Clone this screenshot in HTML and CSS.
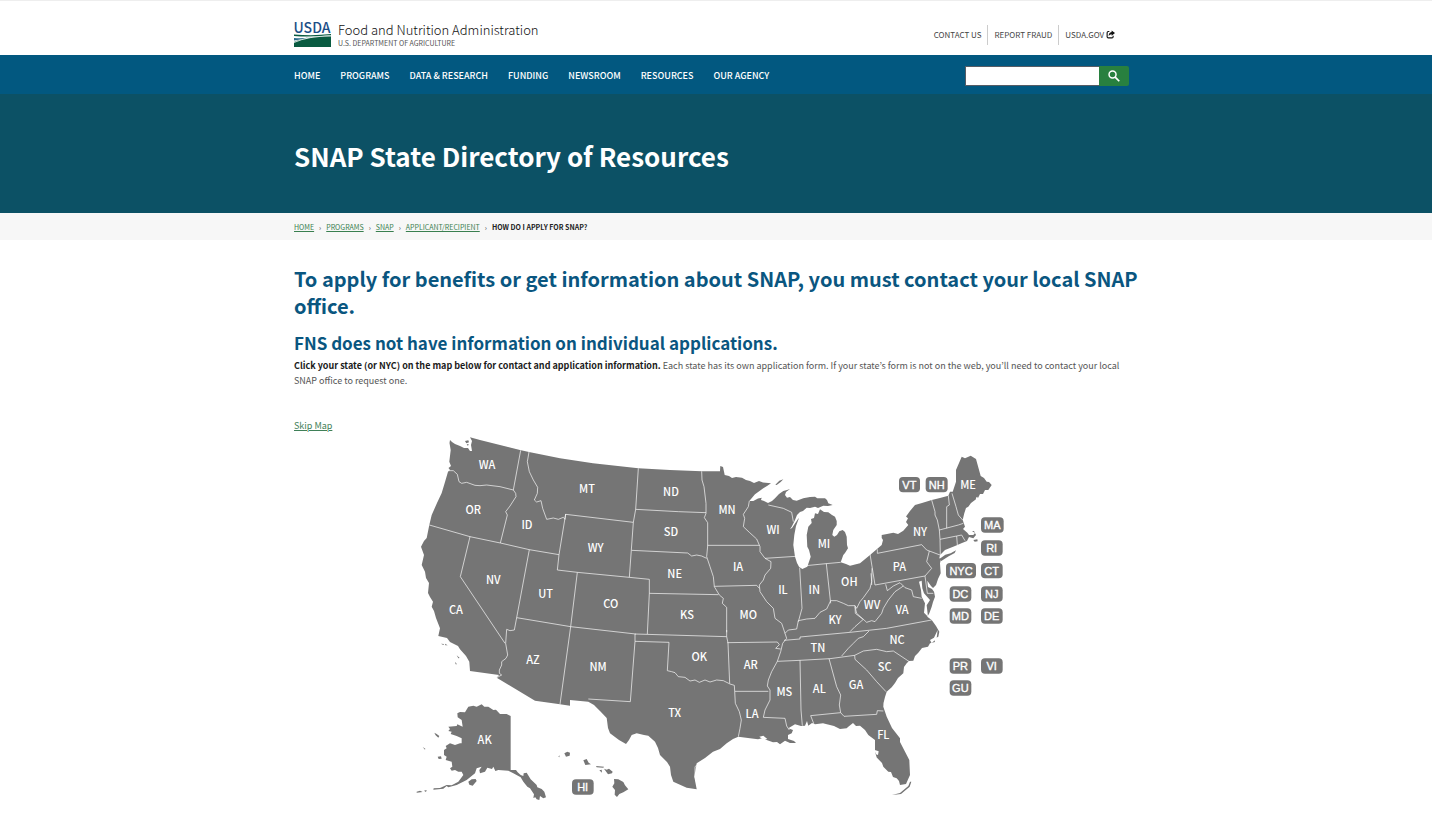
FILE: index.html
```html
<!DOCTYPE html>
<html lang="en">
<head>
<meta charset="utf-8">
<title>SNAP State Directory of Resources</title>
<link rel="stylesheet" href="styles.css">
</head>
<body>
<header class="masthead">
  <div class="container masthead-row">
    <a class="brand" href="#">
      <svg class="brand-logo" viewBox="0 0 37 26" role="img" aria-label="USDA logo">
        <text class="brand-word" x="18" y="11" text-anchor="middle">USDA</text>
        <path fill="#0a5b41" d="M0 25V20Q10 15 37 13.500V25Z"/>
        <path fill="#0a5b41" d="M0 12.500Q20 14 37 12V13Q18 15.500 0 14Z"/>
        <path fill="#2b6b8a" d="M0 16Q9 17 16 15Q8 18 0 18.500Z"/>
        <path fill="none" stroke="#fff" stroke-width=".8" d="M0 20.500Q14 14 37 14"/>
      </svg>
      <span class="brand-text">
        <span class="brand-name">Food and Nutrition Administration</span>
        <span class="brand-dept">U.S. DEPARTMENT OF AGRICULTURE</span>
      </span>
    </a>
    <nav class="utility" aria-label="Utility">
      <a href="#">CONTACT US</a>
      <a href="#">REPORT FRAUD</a>
      <a href="#">USDA.GOV
        <svg class="share" viewBox="0 0 24 24" aria-hidden="true"><path fill="none" stroke="#111" stroke-width="3" d="M9 4H6Q3 4 3 7V18Q3 21 6 21H16Q19 21 19 18V15"/><path fill="#111" d="M15 1L24 8L15 15V11Q10 11 7 16Q7 6 15 5Z"/></svg>
      </a>
    </nav>
  </div>
</header>
<div class="navbar">
  <div class="container navbar-row">
    <nav class="menu" aria-label="Main">
      <a href="#">HOME</a>
      <a href="#">PROGRAMS</a>
      <a href="#">DATA &amp; RESEARCH</a>
      <a href="#">FUNDING</a>
      <a href="#">NEWSROOM</a>
      <a href="#">RESOURCES</a>
      <a href="#">OUR AGENCY</a>
    </nav>
    <form class="search" role="search">
      <input class="search-box" type="search" aria-label="Search">
      <button class="search-button" type="button" aria-label="Search">
        <svg viewBox="0 0 24 24" aria-hidden="true"><circle cx="9.500" cy="9.500" r="6" fill="none" stroke="#fff" stroke-width="2.500"/><path d="M14 14L21 21" stroke="#fff" stroke-width="3"/></svg>
      </button>
    </form>
  </div>
</div>
<div class="hero">
  <div class="container"><h1>SNAP State Directory of Resources</h1></div>
</div>
<nav class="crumbs" aria-label="Breadcrumb">
  <ol class="container crumb-list">
    <li><a href="#">HOME</a></li>
    <li><a href="#">PROGRAMS</a></li>
    <li><a href="#">SNAP</a></li>
    <li><a href="#">APPLICANT/RECIPIENT</a></li>
    <li aria-current="page">HOW DO I APPLY FOR SNAP?</li>
  </ol>
</nav>
<main class="container content">
  <h2>To apply for benefits or get information about SNAP, you must contact your local SNAP office.</h2>
  <h3>FNS does not have information on individual applications.</h3>
  <p><strong>Click your state (or NYC) on the map below for contact and application information.</strong> Each state has its own application form. If your state’s form is not on the web, you’ll need to contact your local SNAP office to request one.</p>
  <a class="skip" href="#after-map">Skip Map</a>
  <svg class="map" viewBox="0 0 1830 1134" role="group" aria-label="Map of the United States">
    <!-- Land -->
    <path class="land" transform="scale(3) translate(-400 -430)" d="M450 440L452 442 455 444 460 446 464 448 468 448 470 451 472 451 471 445 472 441 470 437.300 480 440 500 445 520 450 529 452 560 458.300 593 463.300 638.300 468.300 670 470 701.700 471.300 720 471.300 720.300 466 723 467 724.700 475 729 476 732 478 736 477 742 477.700 746 480 750 481 754 483 759 481 763 482.500 771 483.300 767 486 763.300 488.300 755 494.300 749.300 501 753.300 501 758 498.500 761.700 497.700 761 500 764 501 768 503 772 501 775 498.300 779 494 783.300 491 787 490 790 489 786 492 785 495 787 497.700 790 497 793 500 796.700 500.700 803.300 498.300 810 497 815 496.700 817.300 498.300 825 498.300 827 500 828.300 503.300 832.700 505 828 506 823.300 505.700 818 508 815 506.700 810 508 806.700 507.700 803 511 800 512 797 515 795 520 791.700 526.700 790 529 792 528 798 519 799 518 796 526 794.300 535 793.300 545 795 556.700 797 563 799 566.700 802.300 569 807.300 566.700 810.700 556.700 809 550 807.300 546.700 806.700 535 808.300 526.700 811.700 523 811 519 814 518 815 513.300 818 514 820 509.300 824 512 828.300 512.300 832 515 835 516.700 836.700 521 836.700 525 833.300 530 832.300 535 834.300 536.700 837 535 839.300 531.300 842.700 530 845 532 846.700 536.700 847 545 848 548.300 845 553 843.300 555 840.700 562.300 846 564 850 565.700 860 563.300 870 555 881.700 545 883 540 881.700 538 881.700 535 887 534 893.300 532.700 898 534 903.300 530.700 908.300 525 906 522 908 518.300 906 516.500 910 511 915 505 922 503 931.700 500 940 498 948.300 495.700 950 491.700 952.700 491.700 956 481.700 956 470 961.700 456.700 965 458.300 970.700 455.700 976 459 980.700 476 984 478 986.700 481.700 989 482 991.700 485 988.300 490 985 490 983 494 980 494 978 498 975 500 971 503 968.300 506.700 966 508 964.300 513.300 962.700 520 965 526.700 963 529 967.300 532.700 969 535 973.300 535 975 533 972 531 974 531 976 535 973.300 538.300 969 537 967 541 962 543 955 546 945 550 940 555 939.300 558.300 941 559 940 563.300 940.700 573.300 938 579 936 585 933 588 931 586 927.300 580.700 928 587 932 589 934 591.700 935 596.700 933 602 931.700 606.700 929.300 613.300 927.300 616.700 931.700 620 936 626 939.300 631.700 938.300 636.700 934 639 935 642 930 643.300 928 646.700 922 648 918.300 652.700 915 656 913.300 660.700 909 661 906.700 663.300 904 667 903.300 673.300 898 678 895 683 891.700 687.300 886.700 691.700 885 697 883.500 703 883.300 706.700 886.700 716.700 892 728 900 738.300 900 742 909.300 760 910 775 906 784 900 785 899 781 896.700 778.300 893 777 891 772 888.300 771.700 883.300 766.700 882 763 876.700 757.500 875 751.700 875 740 868.300 735 865 730 860 725.700 856 726 853 723 848 727 846.700 728.300 840 729 834 726 830 725 823 723.300 815 724.300 812 723 808.300 725.700 807 721 805 725.700 801 726 795 724.300 788.300 728.300 793 730 791.700 733.300 788 735 788 739 794 741 796 743 790 743 785 740.700 780 744.300 777 742 773 742.300 766.700 740 763 738 758 739.300 750 738.300 738.300 736.700 733 739 726.700 743.300 720 749 713 751.700 705 758 696.700 763.300 694.300 776.700 696.700 789.300 686.700 787.700 673.300 781.700 671 775 670 766.700 667 762 660 755 658 748 655 741.700 648.300 735.700 644 735 636.700 733.300 631.700 735 629 740 626 744 619 740 610 733.300 608 728 606.700 718 600 711 594 705 588.300 701.700 570 700 570 705.700 560 704.300 535 700.700 496.700 677.700 499 675 470 671 469.300 661.700 466 656 460 649.300 458 646 450 642 447 638 438.300 636 440 628.300 436 618 434 611 431.700 606.700 433 601.700 430 597 428 593 429 583 426 578 425 571.700 421.700 565 424 555 421 546.700 424 541 426.700 538 429.300 525 431.700 515 437 503 441.700 493 445 482 448 471.700 450 470 448.500 468 451 466 449.300 461.700 450.700 450 449.500 443Z"/>
    <path class="land" transform="translate(30 450)" d="M142 400L150 396 165 397 175 380 190 377 200 380 215 373 223 380 235 380 250 390 258 389 270 402 290 402 302 408V570L318 570 323 577 332 585 340 588 341 580 350 578 362 598 380 615 382 622 395 627 403 635 408 652 400 655 390 648 388 660 380 658 376 652 370 654 372 643 360 625 352 620 340 605 332 592 310 580 295 572 265 570 256 573 250 560 246 567 232 563 225 575 210 580 208 570 215 560 200 565 195 580 170 600 140 615 115 622 110 618 100 626 70 629 71 625 90 624 110 615 125 616 145 605 160 585 155 575 145 575 135 570 125 572 120 565 127 560 125 545 107 540 110 530 102 525 102 510 110 505 107 498 120 490 135 495 150 490 155 490 155 475 140 468 122 462 125 455 115 453 120 447 115 440 140 438 142 433 158 440 155 420 143 412ZM175 605L185 598 197 597 200 603 188 617 178 614ZM83 530L93 529 95 536 86 537ZM73 458L80 462 88 468 85 473 77 466ZM38 501L46 506 45 509ZM20 635L30 632 38 636 20 638ZM42 632L50 630 48 636ZM463 520L472 515 480 518 479 527 468 530ZM445 530L449 526 448 532ZM520 541L530 537 536 548 543 553 526 555ZM558 558L582 560 580 563 560 562ZM568 571L575 569 576 578ZM582 566L590 569 597 566 608 575 606 580 594 583ZM612 597L625 598 640 606 645 616 655 628 640 637 628 642 621 651 614 644 615 630 607 620 613 610ZM93 191L102 192 100 195ZM105 191L113 196 106 196ZM140 226L149 234 145 235ZM135 245L141 253 137 253Z"/>
    <path class="land" d="M1618 387L1636 374 1652 370 1668 361 1664 369 1646 379 1624 393ZM1126 164L1138 152 1150 148 1142 156 1130 165ZM1476 1095L1500 1089 1525 1068 1530 1055 1534 1055 1529 1070 1503 1092ZM1720 330L1732 328 1733 334 1724 335ZM195 33L205 31 207 37 199 40ZM200 43L206 42 204 48Z"/>
    <!-- Bays and inlets -->
    <path class="water" transform="translate(1350 60)" d="M207 395L215 392 217 415 222 430 240 450 230 466 234 500 222 488 225 460 215 440 213 420ZM240 570L252 563 263 540 260 565 245 580ZM378 143L382 140 385 149 390 138 392 144 388 153 377 156Z"/>
    <path class="water" transform="translate(960 450)" d="M462 509L476 514 474 525 468 523ZM118 470L130 467 142 477 130 479Z"/>
    <!-- State borders, west to east -->
    <path class="border" d="M362 61L340 180M147 122L160 122 172 133 177 155 185 160 200 157 225 166 240 167 260 165 300 170 340 180 347 190 348 200 330 228 317 245 322 255 301 339M88 285L210 320 301 339 388 359 477 374M387 66L382 95 388 125 400 150 413 172 412 190 403 210 410 216 423 212 428 235 440 268 460 264 475 268 490 262 495 268 497 252L477 374 472 420 532 427M210 320L181 440 315 640M388 359L350 563M532 427L512 590"/>
    <path class="border" transform="translate(480 0)" d="M17 253L220 277M235 115L227 238 220 277 208 442M52 427L208 442 268 448V490M268 490L475 494M227 238L355 245 438 248M215 361L383 369 395 378 410 375 425 378 440 385M425 124L426 150 432 170 438 220 438 250 433 263 443 278 443 348 440 380 450 410 460 440 463 470 478 495 490 505 487 520 500 532V607M268 490L262 612"/>
    <path class="border" transform="translate(900 75)" d="M23 271H178M148 138L145 155 130 178 134 190 130 215 148 232 170 252 180 275 180 290 195 310 213 320 212 340 195 360 190 375 178 390 180 410 200 440 220 460 225 490 245 505 255 535M43 394L170 391 178 400M195 310L288 304M205 150L250 160 275 172 280 200M299 338L306 460 295 500M307 333L378 326 422 322M379 326L392 445M255 535L265 525 290 522 295 497 320 492 345 490 360 472 380 462 392 437 410 437 430 445 445 452 465 452 470 460 480 440 490 428 510 400 515 380 513 355M465 452L466 475 488 492"/>
    <path class="border" transform="translate(1350 60)" d="M60 312L75 405 225 378M66 355L65 405M15 470L20 490 50 517 65 512 75 515 95 490 100 475 115 450 135 425 150 415 160 408M107 403L112 422 130 408 150 398 165 413 185 420 190 440 215 445M40 508L15 530 0 545M82 298L82 310 215 284 230 300 270 315M238 303L230 335 245 355 225 378 232 430 250 430M245 150L255 185 255 195 262 210 268 240 270 268 271 315M295 137L298 165 290 170V235M306 130L318 170 325 195 338 210M268 240L325 225 340 220M270 268L320 258 335 255 345 272M320 258L322 285"/>
    <path class="border" transform="translate(30 450)" d="M320 113L313 150 300 152 290 148 287 190 293 225 288 235 275 245 275 255 268 270 268 280 275 285 260 293M320 113L482 140 677 162M482 140L450 373"/>
    <path class="border" transform="translate(600 570)" d="M105 42L380 50M105 42V64L207 67 202 152 215 155 225 158 235 170 255 172 270 183 285 180 298 187 315 180 330 186 350 180 370 182 390 192 403 196 404 213 406 250 418 275 424 300 420 325 415 350M105 64L91 245 -35 237M380 30V50L384 69 389 190"/>
    <path class="border" transform="translate(960 450)" d="M192 181L240 177V171L390 157 500 145 635 120M172 244L240 241 330 236 404 226 430 213 470 208 500 215 520 213 568 245M447 153L430 170 415 175 400 190 385 205 365 228M404 226L405 238 440 270 470 305 498 335M240 241L243 390 247 437M327 236L350 320 362 345 358 375 362 398 272 407 282 433M362 398L372 409 470 403 472 392 490 393M195 160L200 175 188 190 182 215 172 244 155 275 145 300 142 318 150 330 150 360 135 390 130 412 195 415 200 438 208 450M22 188L172 186 178 194 167 205 182 207M45 334H145"/>
    <path class="border" d="M900 997L885 1010 885 1040 893 1072"/>
    <!-- State codes -->
    <g class="code">
      <text x="261" y="117">WA</text><text x="220" y="252">OR</text><text x="381" y="297">ID</text><text x="561" y="189">MT</text>
      <text x="813" y="198">ND</text><text x="981" y="252">MN</text><text x="813" y="318">SD</text><text x="587" y="366">WY</text>
      <text x="824" y="444">NE</text><text x="1119" y="312">WI</text><text x="1272" y="354">MI</text><text x="1014" y="423">IA</text>
      <text x="1149" y="492">IL</text><text x="1243" y="492">IN</text><text x="1348" y="468">OH</text><text x="1498" y="423">PA</text>
      <text x="1560" y="318">NY</text><text x="1704" y="177">ME</text><text x="280" y="462">NV</text><text x="437" y="504">UT</text>
      <text x="632" y="534">CO</text><text x="861" y="567">KS</text><text x="1045" y="567">MO</text><text x="1305" y="582">KY</text>
      <text x="1416" y="537">WV</text><text x="1506" y="552">VA</text><text x="1491" y="642">NC</text><text x="1254" y="666">TN</text>
      <text x="168" y="552">CA</text><text x="399" y="702">AZ</text><text x="594" y="723">NM</text><text x="898" y="693">OK</text>
      <text x="1052" y="717">AR</text><text x="1454" y="723">SC</text><text x="1368" y="777">GA</text><text x="1258" y="789">AL</text>
      <text x="1153" y="798">MS</text><text x="1056" y="864">LA</text><text x="824" y="861">TX</text><text x="1450" y="927">FL</text>
      <text x="254" y="942">AK</text>
    </g>
    <g class="tag">
      <rect x="1497" y="141" width="63" height="46" rx="12"/><text x="1528" y="177">VT</text>
      <rect x="1577" y="141" width="66" height="46" rx="12"/><text x="1610" y="177">NH</text>
      <rect x="1743" y="262" width="68" height="46" rx="12"/><text x="1777" y="298">MA</text>
      <rect x="1743" y="331" width="65" height="46" rx="12"/><text x="1775" y="367">RI</text>
      <rect x="1638" y="399" width="90" height="46" rx="12"/><text x="1683" y="435">NYC</text>
      <rect x="1743" y="399" width="65" height="46" rx="12"/><text x="1775" y="435">CT</text>
      <rect x="1649" y="469" width="65" height="46" rx="12"/><text x="1681" y="505">DC</text>
      <rect x="1743" y="469" width="65" height="46" rx="12"/><text x="1775" y="505">NJ</text>
      <rect x="1649" y="535" width="65" height="46" rx="12"/><text x="1681" y="571">MD</text>
      <rect x="1743" y="535" width="65" height="46" rx="12"/><text x="1775" y="571">DE</text>
      <rect x="1649" y="685" width="65" height="46" rx="12"/><text x="1681" y="721">PR</text>
      <rect x="1743" y="685" width="65" height="46" rx="12"/><text x="1775" y="721">VI</text>
      <rect x="1649" y="751" width="65" height="46" rx="12"/><text x="1681" y="787">GU</text>
      <rect x="516" y="1048" width="65" height="46" rx="12"/><text x="548" y="1084">HI</text>
    </g>
  </svg>
</main>
</body>
</html>
```
FILE: styles.css
```css
* { box-sizing: border-box; }
body {
  margin: 0;
  background: #fff;
  color: #555;
  font-family: "Noto Sans CJK JP", "Noto Sans", sans-serif;
  font-size: 9px;
  line-height: 15px;
}
a { color: inherit; text-decoration: none; }
.container { max-width: 844px; margin: 0 auto; }

.masthead { border-top: 1px solid #eee; }
.masthead-row { display: flex; justify-content: space-between; align-items: flex-end; padding: 20px 23px 7px 0; }
.brand { display: flex; gap: 7px; }
.brand-logo { width: 37px; height: 26px; margin-top: 1px; overflow: visible; }
.brand-word { font-size: 14px; font-weight: 500; fill: #1c4e86; }
.brand-text { display: flex; flex-direction: column; }
.brand-name { font-size: 13px; line-height: 18px; font-weight: 300; color: #111; }
.brand-dept { font-size: 7px; line-height: 8px; color: #555; }
.utility { display: flex; align-items: center; font-size: 8px; line-height: 20px; color: #444; margin-bottom: 3px; }
.utility a { padding: 0 6px; border-left: 1px solid #ccc; }
.utility a:first-child { border-left: 0; }
.utility a:last-child { padding-right: 0; }
.share { width: 9px; height: 9px; vertical-align: -1px; }

.navbar { background: #025880; }
.navbar-row { display: flex; justify-content: space-between; align-items: center; padding: 11px 9px 8px 0; }
.menu { display: flex; gap: 20px; color: #fff; font-weight: 500; line-height: 20px; }
.search { display: flex; }
.search-box { width: 134px; height: 20px; padding: 0 4px; border: 1px solid #565c65; border-right: 0; border-radius: 0; background: #fff; font: inherit; }
.search-button { display: grid; place-items: center; width: 30px; height: 20px; padding: 0; border: 0; border-radius: 0 2px 2px 0; background: #28803f; }
.search-button svg { width: 14px; height: 14px; }

.hero { background: #0c5165; padding: 44px 0 39px; }
h1 { margin: 0; color: #fff; font-size: 26px; line-height: 36px; font-weight: 700; }

.crumbs { background: #f7f7f7; padding: 7px 0 5px; font-size: 7px; }
.crumb-list { display: flex; list-style: none; padding: 0; }
.crumb-list a { color: #3a7f50; text-decoration: underline; }
.crumb-list li + li::before { content: "›"; margin: 0 5px; color: #444; font-weight: 400; }
.crumb-list [aria-current] { color: #222; font-weight: 700; }

.content { padding-top: 25px; padding-bottom: 20px; }
h2, h3 { margin: 0; color: #0a5680; font-weight: 700; }
h2 { font-size: 20px; line-height: 27px; margin-bottom: 12px; }
h3 { font-size: 17px; line-height: 24px; margin-bottom: 3px; }
.content p { margin: 0 0 30px; }
.content strong { color: #1b1b1b; }
.skip { display: block; width: fit-content; color: #3f8058; text-decoration: underline; }
.map { display: block; width: 610px; max-width: 100%; height: auto; margin: -3px 0 0 106px; }
.land { fill: #757575; }
.water { fill: #fff; }
.border { fill: none; stroke: #fff; stroke-width: 2; stroke-linejoin: round; }
.code text { fill: #fff; font-size: 33px; font-weight: 500; text-anchor: middle; }
.tag rect { fill: #757575; }
.tag text { fill: #fff; stroke: #fff; stroke-width: 1; font-family: "Liberation Sans", Arial, sans-serif; font-size: 33px; text-anchor: middle; }
```
